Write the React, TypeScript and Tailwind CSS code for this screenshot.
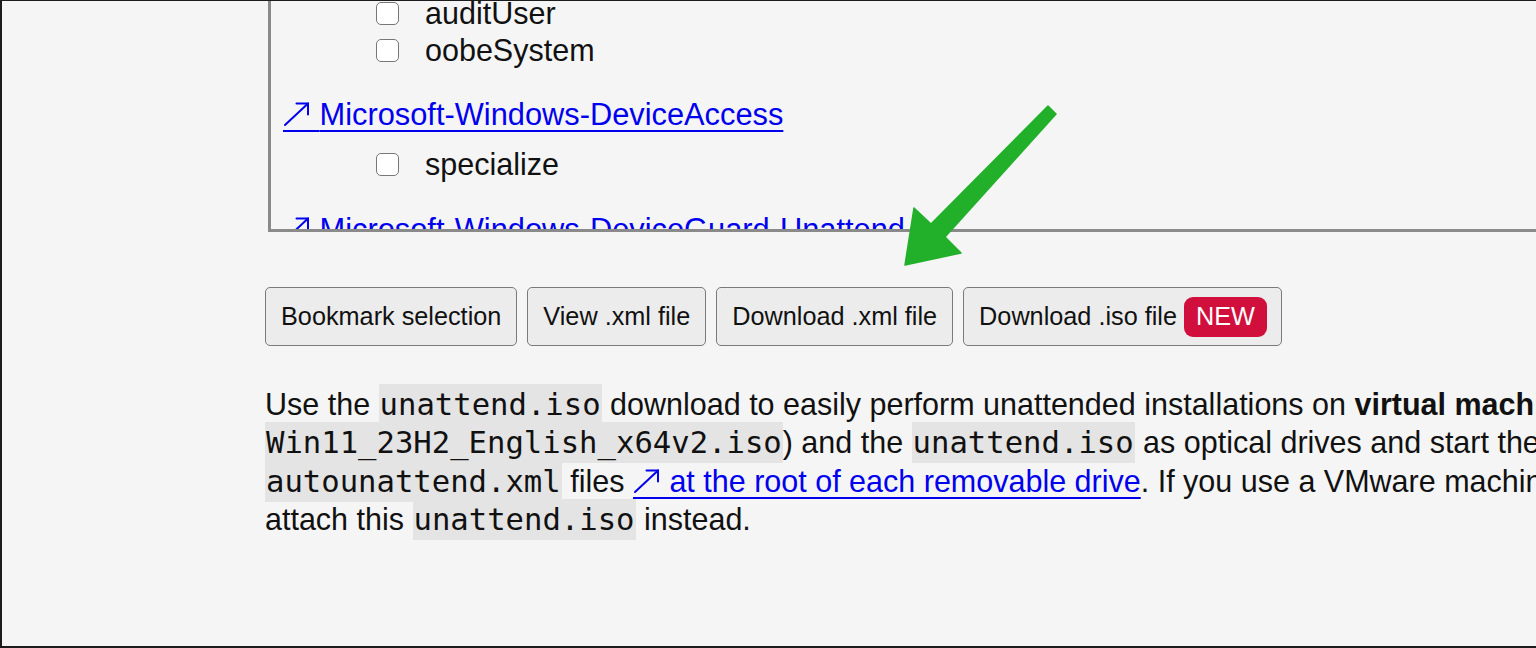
import React from "react"

const sans = { fontFamily: '"Liberation Sans", Arial, Helvetica, sans-serif' }

function Code({ children }: { children: React.ReactNode }) {
  return (
    <code className="bg-[#e4e4e4] text-[#111] font-['DejaVu_Sans_Mono',monospace] text-[30.6px] leading-none px-[1px] py-[3px]">
      {children}
    </code>
  )
}

// thin north-east arrow; draws its own underline so the link underline runs under it
function NorthEast() {
  return (
    <svg width="28" height="30" viewBox="0 0 28 30" className="inline-block align-[-7px]" fill="none" stroke="currentColor" strokeWidth="2" strokeLinecap="round">
      <path d="M2 23 L25 1.5" />
      <path d="M13.5 1.5 H25 V12.5" />
      <path d="M0 29 H28" strokeLinecap="butt" />
    </svg>
  )
}

function Check({ label }: { label: string }) {
  return (
    <li className="flex items-center h-[37px]">
      <span className="w-[23px] h-[23px] rounded-[5px] border-[1.5px] border-[#777] bg-white flex-shrink-0" />
      <span className="ml-[26px]">{label}</span>
    </li>
  )
}

function Pass({ label }: { label: string }) {
  return (
    <a className="block h-[38px] leading-[38px] text-[#0000ee] underline underline-offset-[5px] decoration-[2px] whitespace-nowrap text-[30.8px]">
      <NorthEast /> {label}
    </a>
  )
}

export default function App() {
  const buttons = ["Bookmark selection", "View .xml file", "Download .xml file"]

  return (
    <div
      className="relative w-[1536px] h-[648px] overflow-hidden bg-[#f5f5f5] text-[#111] border-l-2 border-t border-b-2 border-[#1c1c1c] text-[30.5px]"
      style={sans}
    >
      {/* scrolled component list */}
      <div className="ml-[266px] h-[231px] border-l-[3px] border-b-[3px] border-[#8a8a8a] overflow-hidden">
        <div className="-mt-[6px] pl-[12px]">
          <ul className="pl-[93px]">
            <Check label="auditUser" />
            <Check label="oobeSystem" />
          </ul>
          <div className="mt-[27px]">
            <Pass label="Microsoft-Windows-DeviceAccess" />
          </div>
          <ul className="pl-[93px] mt-[12px]">
            <Check label="specialize" />
          </ul>
          <div className="mt-[28px]">
            <Pass label="Microsoft-Windows-DeviceGuard-Unattend" />
          </div>
          <ul className="pl-[93px] mt-[12px]">
            <Check label="specialize" />
          </ul>
        </div>
      </div>

      <div className="ml-[263px]">
        <div className="flex gap-[10px] mt-[55px]">
          {buttons.map((b) => (
            <button
              key={b}
              className="h-[59px] px-[15px] border-[1.5px] border-[#7a7a7a] rounded-[5px] bg-[#ececec] text-[25.25px] text-[#111] flex items-center"
            >
              {b}
            </button>
          ))}
          <button className="h-[59px] pl-[15px] pr-[14px] border-[1.5px] border-[#7a7a7a] rounded-[5px] bg-[#ececec] text-[25.25px] text-[#111] flex items-center">
            Download .iso file
            <span className="ml-[7px] h-[40px] px-[12px] rounded-[9px] bg-[#d10f3d] text-white flex items-center">NEW</span>
          </button>
        </div>

        <p className="mt-[39px] leading-[38.3px] whitespace-nowrap">
          Use the <Code>unattend.iso</Code> download to easily perform unattended installations on{" "}
          <b>virtual machines</b>. Simply attach both the Windows installation ISO (e.g.
          <br />
          <Code>Win11_23H2_English_x64v2.iso</Code>) and the <Code>unattend.iso</Code> as optical drives and start the VM.
          Windows Setup will look for
          <br />
          <Code>autounattend.xml</Code> files{" "}
          <a className="text-[#0000ee] underline underline-offset-[5px] decoration-[2px]">
            <NorthEast /> at the root of each removable drive
          </a>
          . If you use a VMware machine, you can
          <br />
          attach this <Code>unattend.iso</Code> instead.
        </p>
      </div>

      {/* annotation arrow */}
      <svg className="absolute left-0 top-0 pointer-events-none" width="1536" height="648" viewBox="0 0 1536 648">
        <polygon
          points="1046,105 1054,113 943,236 959,252 903,264 912,207 929,223"
          fill="#22b02a"
          stroke="#22b02a"
          strokeWidth="1.5"
          strokeLinejoin="round"
        />
      </svg>
    </div>
  )
}
